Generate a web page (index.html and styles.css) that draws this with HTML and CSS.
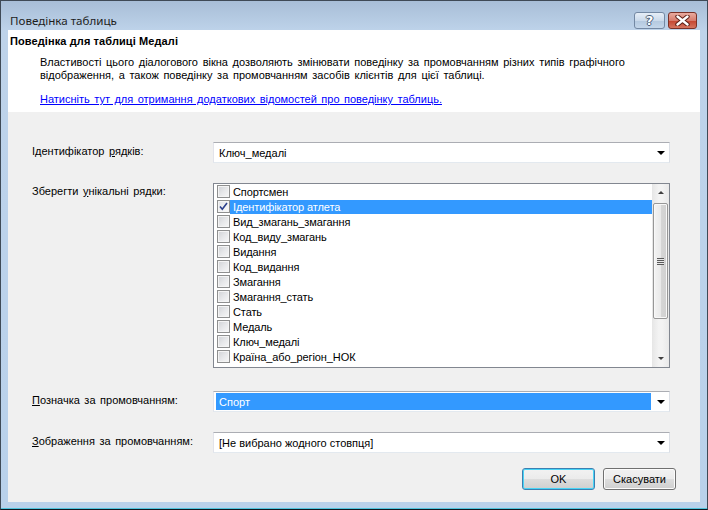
FILE: index.html
```html
<!DOCTYPE html>
<html>
<head>
  <meta charset="UTF-8">
  <title>Поведінка таблиць</title>
  <link rel="stylesheet" href="styles.css">
</head>
<body>
  <div class="window">
    <!-- рядок заголовка вікна -->
    <div class="titlebar">
      <span class="title">Поведінка таблиць</span>
      <div class="caption-buttons">
        <span class="cap-btn help">?</span>
        <span class="cap-btn close">
          <svg width="15" height="11" viewBox="0 0 15 11">
            <path d="M2.5 1.5 L12.5 9.5 M12.5 1.5 L2.5 9.5" stroke="#5b1d14" stroke-width="4.4" stroke-linecap="round"/>
            <path d="M2.5 1.5 L12.5 9.5 M12.5 1.5 L2.5 9.5" stroke="#fff" stroke-width="2.4" stroke-linecap="round"/>
          </svg>
        </span>
      </div>
    </div>

    <div class="client">
      <!-- білий блок з описом -->
      <div class="header">
        <h1>Поведінка для таблиці Медалі</h1>
        <p>Властивості цього діалогового вікна дозволяють змінювати поведінку за промовчанням різних типів графічного відображення, а також поведінку за промовчанням засобів клієнтів для цієї таблиці.</p>
        <a href="#">Натисніть тут для отримання додаткових відомостей про поведінку таблиць.</a>
      </div>

      <div class="form">
        <div class="row row-id">
          <label>Ідентифікатор <u>р</u>ядків:</label>
          <div class="combo">
            <span class="value">Ключ_медалі</span>
            <span class="arrow"></span>
          </div>
        </div>

        <div class="row row-unique">
          <label>Зберегти <u>у</u>нікальні рядки:</label>
          <div class="listbox">
            <ul class="items">
              <li><span class="check"></span><span class="text">Спортсмен</span></li>
              <li class="selected"><span class="check checked"><svg width="9" height="9" viewBox="0 0 9 9"><path d="M1 4.5 L3.3 7.3 L8 1" fill="none" stroke="#2b3f8c" stroke-width="1.6"/></svg></span><span class="text">Ідентифікатор атлета</span></li>
              <li><span class="check"></span><span class="text">Вид_змагань_змагання</span></li>
              <li><span class="check"></span><span class="text">Код_виду_змагань</span></li>
              <li><span class="check"></span><span class="text">Видання</span></li>
              <li><span class="check"></span><span class="text">Код_видання</span></li>
              <li><span class="check"></span><span class="text">Змагання</span></li>
              <li><span class="check"></span><span class="text">Змагання_стать</span></li>
              <li><span class="check"></span><span class="text">Стать</span></li>
              <li><span class="check"></span><span class="text">Медаль</span></li>
              <li><span class="check"></span><span class="text">Ключ_медалі</span></li>
              <li><span class="check"></span><span class="text">Країна_або_регіон_НОК</span></li>
            </ul>
            <div class="scrollbar">
              <span class="sb-arrow up"></span>
              <div class="sb-track">
                <div class="sb-thumb"><span class="grip"></span></div>
              </div>
              <span class="sb-arrow down"></span>
            </div>
          </div>
        </div>

        <div class="row row-label">
          <label><u>П</u>означка за промовчанням:</label>
          <div class="combo">
            <span class="value highlighted">Спорт</span>
            <span class="arrow"></span>
          </div>
        </div>

        <div class="row row-image">
          <label><u>З</u>ображення за промовчанням:</label>
          <div class="combo">
            <span class="value">[Не вибрано жодного стовпця]</span>
            <span class="arrow"></span>
          </div>
        </div>

        <div class="actions">
          <button class="btn default">OK</button>
          <button class="btn">Скасувати</button>
        </div>
      </div>
    </div>
  </div>
</body>
</html>
```

FILE: styles.css
```css
html, body {
  margin: 0;
  padding: 0;
  overflow: hidden;
}

body {
  font-family: "Liberation Sans", Arial, sans-serif;
  font-size: 11px;
  color: #000;
}

/* рамка вікна */
.window {
  box-sizing: border-box;
  width: 708px;
  height: 510px;
  border: 1px solid #3f4a56;
  border-bottom-color: #101820;
  background: linear-gradient(#a8bed7 0, #bed3ea 30px, #b9d1ea 100%);
  box-shadow: inset 0 -1px 0 #4fc3dc;
  padding: 0 7px 7px;
  display: flex;
  flex-direction: column;
}

.titlebar {
  height: 29px;
  box-sizing: border-box;
  padding: 9px 3px 0 2px;
  display: flex;
  align-items: center;
  justify-content: space-between;
}

.title {
  font-family: "Noto Sans", sans-serif;
  font-size: 11.6px;
  color: #1e1e1e;
  margin-top: 1px;
}

.caption-buttons {
  display: flex;
  gap: 3px;
}

.cap-btn {
  box-sizing: border-box;
  height: 17px;
  border: 1px solid #7388a3;
  border-radius: 3px;
  display: flex;
  align-items: center;
  justify-content: center;
}

.cap-btn.help {
  width: 31px;
  background: linear-gradient(#e6eef7 0, #cbdaeb 50%, #b3c8df 51%, #c4d6ea 100%);
  color: #fff;
  font: bold 13px "DejaVu Sans", sans-serif;
  text-shadow: 1px 0 0 #4a5d78, -1px 0 0 #4a5d78, 0 1px 0 #4a5d78, 0 -1px 0 #4a5d78;
}

.cap-btn.close {
  width: 29px;
  border-color: #7a3127;
  background: linear-gradient(#e9ab9f 0, #d77c6d 50%, #c4442f 51%, #d57560 100%);
}

/* клієнтська частина */
.client {
  flex: 1;
  background: #f0f0f0;
  display: flex;
  flex-direction: column;
}

.header {
  background: #fff;
  height: 82px;
  box-sizing: border-box;
  padding: 4px 0 0 2px;
}

.header h1 {
  margin: 0;
  font-size: 11px;
  line-height: 14px;
  font-weight: bold;
  letter-spacing: 0.1px;
}

.header p {
  margin: 8px 30px 0 30px;
  line-height: 13px;
  word-spacing: 1.6px;
}

.header a {
  display: inline-block;
  margin: 11px 0 0 30px;
  line-height: 13px;
  color: #0000ff;
  word-spacing: 1.4px;
}

.form {
  padding: 30px 30px 0 24px;
  display: flex;
  flex-direction: column;
}

.row {
  display: grid;
  grid-template-columns: 181px 457px;
}

.row label {
  line-height: 13px;
  padding-top: 3px;
  word-spacing: 1.5px;
}

.row-unique {
  margin-top: 20px;
}

.row-unique label {
  padding-top: 2px;
}

.row-label {
  margin-top: 23px;
}

.row-image {
  margin-top: 20px;
}

/* випадаючий список */
.combo {
  box-sizing: border-box;
  height: 21px;
  background: #fff;
  border: 1px solid;
  border-color: #abadb3 #dbdfe6 #e3e9ef #e2e3ea;
  display: flex;
  align-items: center;
  padding: 1px 0 1px 1px;
}

.combo .value {
  flex: 1;
  align-self: stretch;
  display: flex;
  align-items: center;
  padding-left: 4px;
}

.combo .value.highlighted {
  background: #3399ff;
  color: #fff;
  padding-left: 3px;
  margin-left: 1px;
}

.combo .arrow {
  width: 18px;
  height: 4px;
  display: flex;
  justify-content: center;
  padding-left: 2px;
  box-sizing: border-box;
}

.combo .arrow::before {
  content: "";
  width: 0;
  height: 0;
  border-left: 4px solid transparent;
  border-right: 4px solid transparent;
  border-top: 4px solid #000;
}

/* список з прапорцями */
.listbox {
  box-sizing: border-box;
  height: 185px;
  background: #fff;
  border: 1px solid #828790;
  display: flex;
  padding: 0 0 0 3px;
}

.items {
  flex: 1;
  list-style: none;
  margin: 0;
  padding: 0;
}

.items li {
  height: 15px;
  display: flex;
  align-items: center;
}

.check {
  box-sizing: border-box;
  width: 13px;
  height: 13px;
  border: 1px solid #8e8f8f;
  box-shadow: inset 0 0 0 1px #f4f4f4;
  background: linear-gradient(135deg, #cfd1d5 0, #e6e7e9 50%, #f7f7f7 100%);
  display: flex;
  align-items: center;
  justify-content: center;
}

.check.checked {
  background: linear-gradient(135deg, #dfe1e5 0, #eeeff1 50%, #fafafa 100%);
}

.items .text {
  padding-left: 3px;
  flex: 1;
  height: 14px;
  line-height: 14px;
  letter-spacing: -0.1px;
}

.items li.selected .text {
  background: #3399ff;
  color: #fff;
}

.scrollbar {
  width: 17px;
  display: flex;
  flex-direction: column;
  background: linear-gradient(to right, #e6e6e6, #f3f3f3 40%, #f3f3f3 60%, #e9e9e9);
}

.sb-arrow {
  height: 17px;
  display: flex;
  align-items: center;
  justify-content: center;
}

.sb-arrow::before {
  content: "";
  width: 0;
  height: 0;
  border-left: 3px solid transparent;
  border-right: 3px solid transparent;
}

.sb-arrow.up::before {
  border-bottom: 3px solid #404040;
}

.sb-arrow.down::before {
  border-top: 3px solid #404040;
}

.sb-track {
  flex: 1;
  padding: 2px 0 0;
}

.sb-thumb {
  box-sizing: border-box;
  height: 116px;
  margin: 0 0 0 1px;
  width: 15px;
  border: 1px solid #979797;
  border-radius: 2px;
  background: linear-gradient(to right, #f4f4f4, #e9e9e9 50%, #d6d6d6 51%, #d0d0d0);
  box-shadow: inset 0 0 0 1px #f8f8f8;
  display: flex;
  align-items: center;
  justify-content: center;
}

.grip {
  width: 7px;
  height: 7px;
  background: repeating-linear-gradient(#5a5a5a 0, #5a5a5a 1px, #e8e8e8 1px, #e8e8e8 2px);
}

/* кнопки */
.actions {
  display: flex;
  justify-content: flex-end;
  gap: 8px;
  margin-top: 15px;
  margin-right: -6px;
}

.btn {
  box-sizing: border-box;
  width: 73px;
  height: 22px;
  font-family: "Liberation Sans", Arial, sans-serif;
  font-size: 11px;
  color: #000;
  border: 1px solid #707070;
  border-radius: 3px;
  background: linear-gradient(#f2f2f2 0, #ebebeb 50%, #dddddd 51%, #cfcfcf 100%);
  box-shadow: inset 0 0 0 1px #fcfcfc;
  padding: 0;
}

.btn.default {
  border-color: #3c7fb1;
  box-shadow: inset 0 0 0 1px #48d4f6;
}
```
